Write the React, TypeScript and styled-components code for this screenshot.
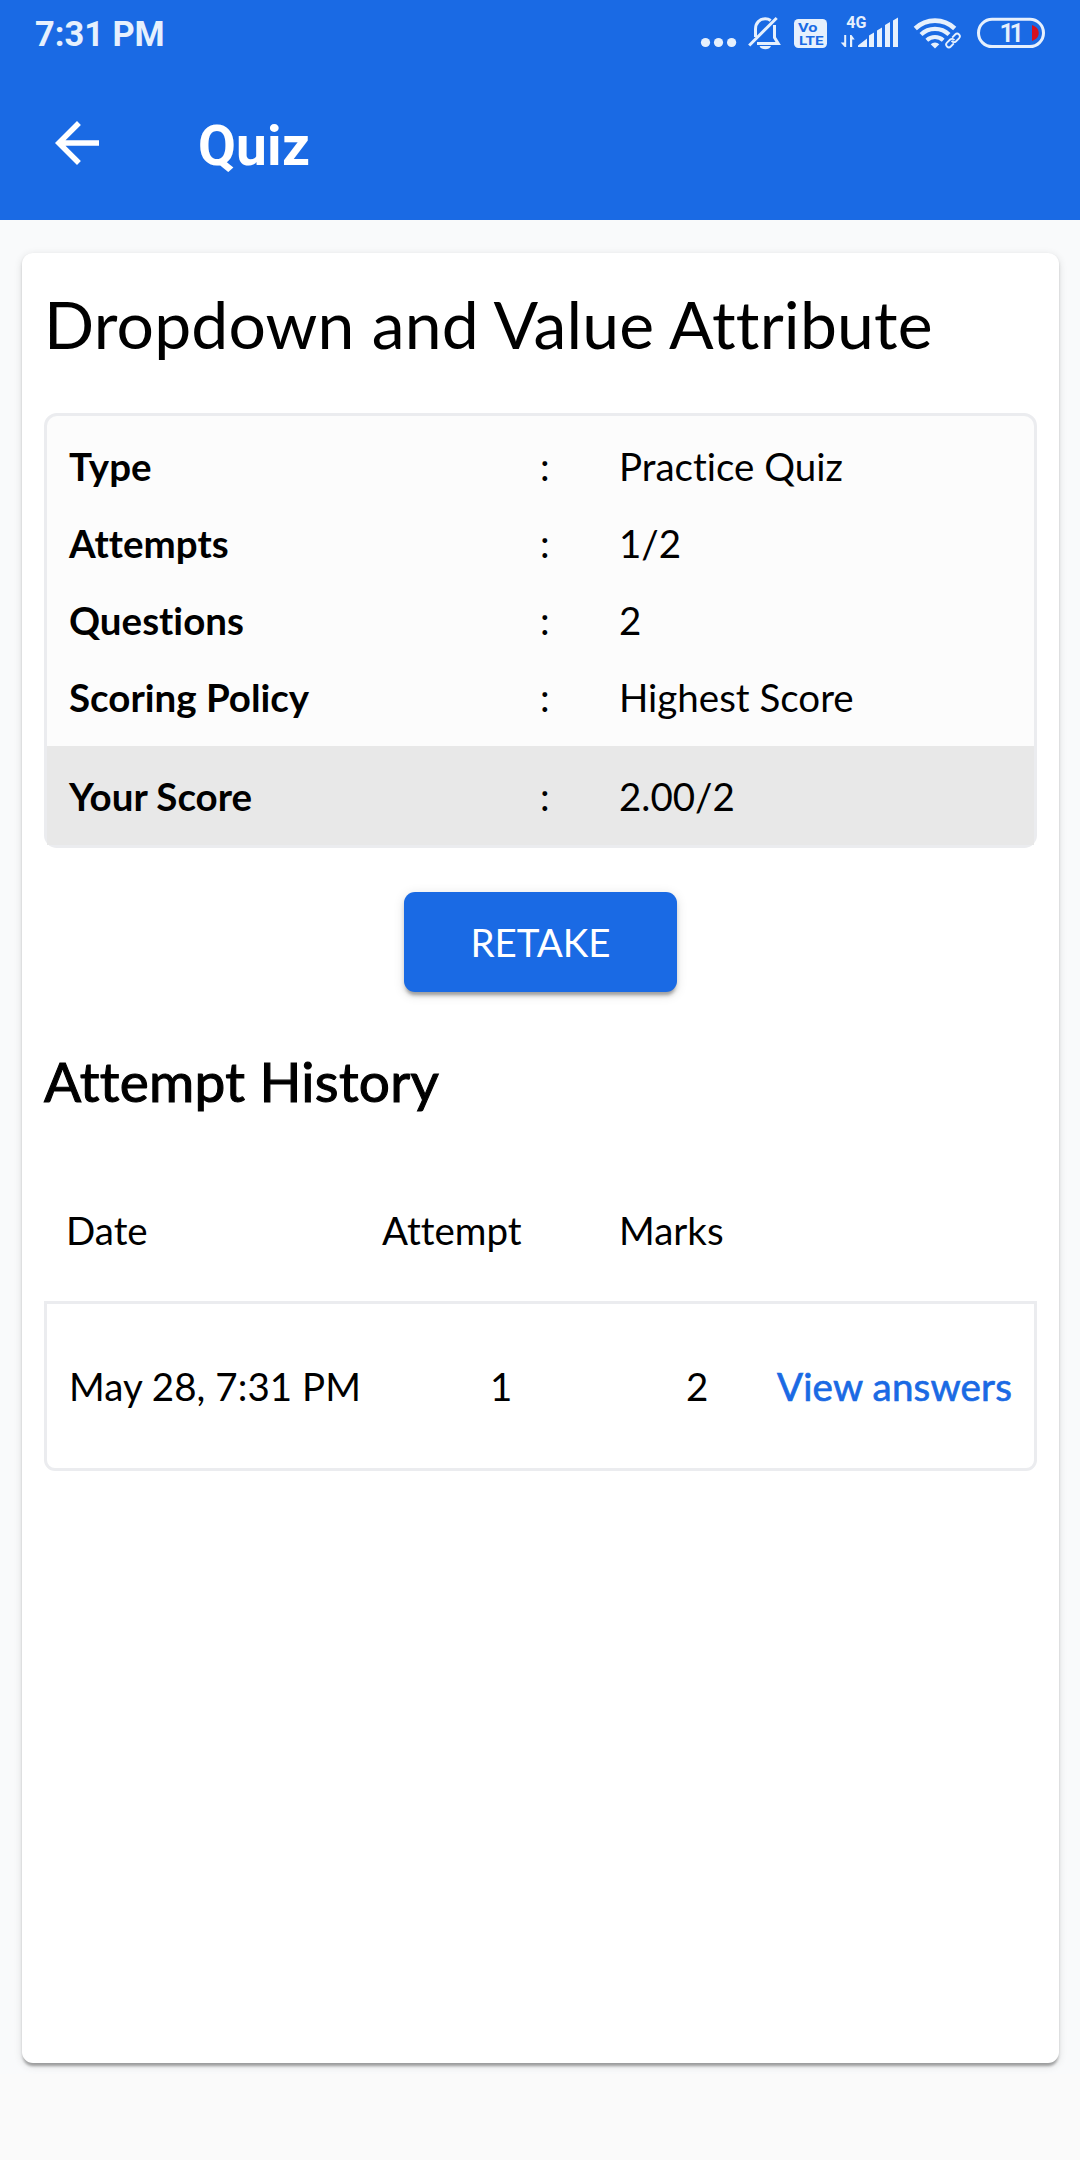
import React from "react";
import styled, { createGlobalStyle } from "styled-components";

const BLUE = "#1a6ae4";
const STATUS = "#e6f0fd";
const LINE = "#ebecef";

const GlobalStyle = createGlobalStyle`
  *, *::before, *::after { box-sizing: border-box; }
  body { margin: 0; background: #fafafa; }
`;

const Screen = styled.div`
  width: 1080px;
  height: 2160px;
  display: flex;
  flex-direction: column;
  overflow: hidden;
  background: #fafafa;
  color: #000;
  font-family: Lato, "Noto Sans", sans-serif;
  font-variant-ligatures: none;
`;

const TopArea = styled.header`
  height: 220px;
  flex: none;
  background: ${BLUE};
  font-family: Roboto, "Noto Sans", sans-serif;
`;

const StatusBar = styled.div`
  height: 66px;
  display: flex;
  justify-content: space-between;
  padding: 0 30px 0 35px;
  color: ${STATUS};
`;

const Clock = styled.span`
  font-size: 34.4px;
  font-weight: 700;
  line-height: 68px;
  white-space: nowrap;
`;

const StatusIcons = styled.div`
  display: flex;
`;

const Glyph = styled.svg`
  display: block;
  height: 66px;
  flex: none;
`;

const AppBar = styled.div`
  height: 154px;
  display: flex;
  align-items: center;
  padding-left: 44px;
`;

const BackButton = styled.button`
  width: 66px;
  height: 66px;
  padding: 0;
  border: 0;
  background: none;
  color: #fff;
`;

const AppTitle = styled.h1`
  margin: 6px 0 0 88px;
  color: #fff;
  font-size: 55px;
  font-weight: 700;
  line-height: 66px;
  letter-spacing: 0.2px;
`;

const Content = styled.main`
  height: 1854px;
  flex: none;
  display: flex;
  padding: 33px 21px 11px 22px;
  background: #f9fafb;
`;

const Card = styled.section`
  flex: 1;
  display: flex;
  flex-direction: column;
  padding: 31px 22px 0;
  border-radius: 11px;
  background: #fff;
  box-shadow: 0 5.5px 2.75px -2.75px rgba(0, 0, 0, 0.2),
    0 2.75px 2.75px rgba(0, 0, 0, 0.14), 0 2.75px 8.25px rgba(0, 0, 0, 0.12);
`;

const QuizTitle = styled.h2`
  margin: 0 0 49px;
  font-size: 66px;
  font-weight: 400;
  line-height: 80px;
  letter-spacing: 0.18px;
  white-space: nowrap;
`;

const Summary = styled.div`
  height: 435px;
  border: 3px solid ${LINE};
  border-radius: 13px;
  background: #fcfcfc;
`;

const SummaryGroup = styled.div<{ $score?: boolean }>`
  padding: 12px 22px 10px;
  background: ${(p) => (p.$score ? "#e8e8e8" : "transparent")};
`;

const SummaryRow = styled.div`
  display: grid;
  grid-template-columns: 471px 79px 1fr;
  font-size: 38.5px;
  line-height: 77px;
  white-space: nowrap;
`;

const Label = styled.span`
  font-weight: 700;
`;

const RetakeButton = styled.button`
  align-self: center;
  width: 273px;
  height: 100px;
  margin: 44px 0 56px;
  padding: 0;
  border: 0;
  border-radius: 11px;
  background: ${BLUE};
  color: #fff;
  font: 400 38.5px/100px Lato, "Noto Sans", sans-serif;
  box-shadow: 0 5.5px 2.75px -2.75px rgba(0, 0, 0, 0.2),
    0 4px 4px rgba(0, 0, 0, 0.14), 0 2.75px 12px rgba(0, 0, 0, 0.12);
`;

const HistoryTitle = styled.h3`
  margin: 0;
  font-size: 55px;
  font-weight: 400;
  line-height: 67px;
  letter-spacing: 0.26px;
  -webkit-text-stroke: 1.1px currentColor;
`;

const HistoryHead = styled.div`
  display: grid;
  grid-template-columns: 316px 237px 1fr;
  height: 143px;
  margin-top: 43px;
  padding: 1px 22px 0;
  font-size: 38.5px;
  line-height: 143px;
`;

const HistoryRow = styled.div`
  display: flex;
  align-items: center;
  height: 170px;
  padding: 0 22px;
  border: 3px solid ${LINE};
  border-radius: 0 0 11px 11px;
  font-size: 38.5px;
  line-height: 46px;
  white-space: nowrap;
`;

const DateCell = styled.span`
  width: 421px;
  letter-spacing: 0.06px;
`;

const AttemptCell = styled.span`
  width: 196px;
`;

const MarksCell = styled.span`
  flex: 1;
`;

const AnswersLink = styled.a`
  color: ${BLUE};
  letter-spacing: 0.18px;
  -webkit-text-stroke: 0.7px currentColor;
`;

type GlyphProps = { x: number; w: number; children: React.ReactNode };

/* Every status glyph spans the bar height; x and w are its horizontal slot. */
const StatusGlyph = ({ x, w, children }: GlyphProps) => (
  <Glyph width={w} height={66} viewBox={`${x} 0 ${w} 66`} fill={STATUS}>
    {children}
  </Glyph>
);

const Dots = () => (
  <StatusGlyph x={699} w={44}>
    <circle cx="705.5" cy="42.5" r="4.6" />
    <circle cx="718.5" cy="42.5" r="4.6" />
    <circle cx="731.6" cy="42.5" r="4.6" />
  </StatusGlyph>
);

const MutedBell = () => (
  <StatusGlyph x={743} w={45}>
    <g fill="none" stroke={STATUS} strokeWidth="3">
      <path d="M755.500 37V29c0-6 4.200-10.200 9.700-10.200 2 0 4 .6 5.500 1.700" />
      <path d="M774.500 25v12.500l3.700 6H757" />
      <path d="M749.2 45.5L776.7 18" />
    </g>
    <path d="M759.5 46h11.5c-1 2.200-3 3.200-5.700 3.200s-4.800-1-5.800-3.200z" />
  </StatusGlyph>
);

const VoLte = () => (
  <StatusGlyph x={788} w={46}>
    <rect x="794" y="19" width="33" height="29" rx="4.500" />
    <g fill={BLUE} fontFamily="Roboto, sans-serif" fontWeight="700" fontSize="12">
      <text x="798" y="31.500" textLength="19.500" lengthAdjust="spacingAndGlyphs">Vo</text>
      <text x="799" y="44.500" textLength="24.500" lengthAdjust="spacingAndGlyphs">LTE</text>
    </g>
  </StatusGlyph>
);

const Signal = () => (
  <StatusGlyph x={834} w={72}>
    <text x="846.200" y="28" fontSize="16.500" fontWeight="700" fontFamily="Roboto, sans-serif" textLength="20.200" lengthAdjust="spacingAndGlyphs">4G</text>
    <path d="M844.200 35h2v12h-1.500l-4-4.500h3.500zM850 47V35h1.500l3.200 4.500h-2.500V47z" />
    <path d="M858 47v-1.500l9-7V47zM869 47V35.500l5-3V47zM877 47V30.500l5-3V47zM885 47V25l5-3V47zM893 47V20.500l5-3V47z" />
  </StatusGlyph>
);

const Wifi = () => (
  <StatusGlyph x={906} w={62}>
    <g fill="none" stroke={STATUS}>
      <path d="M915.300 28.500a28.500 28.500 0 0 1 39.400 0" strokeWidth="4.600" />
      <path d="M921 34.500a20 20 0 0 1 28 0" strokeWidth="4.200" />
      <path d="M926.800 40.300a12 12 0 0 1 16.400 0" strokeWidth="4" />
    </g>
    <path d="M935 48.500l-4.300-4.300a6.200 6.200 0 0 1 8.600 0z" />
    <g transform="translate(953 40.500) rotate(-45)" fill="none">
      <g stroke={BLUE} strokeWidth="5">
        <rect x="-8.500" y="-2.700" width="9.500" height="5.400" rx="2.700" />
        <rect x="-1" y="-2.700" width="9.500" height="5.400" rx="2.700" />
      </g>
      <g stroke={STATUS} strokeWidth="1.800">
        <path d="M-1.500 2.700h-4.300a2.700 2.700 0 0 1 0-5.400h4.500a2.700 2.700 0 0 1 2.400 3.500" />
        <path d="M1.500-2.700h4.300a2.700 2.700 0 0 1 0 5.400H1.300a2.700 2.700 0 0 1-2.400-3.500" />
      </g>
    </g>
  </StatusGlyph>
);

const Battery = () => (
  <StatusGlyph x={968} w={82}>
    <rect x="978.500" y="19.300" width="65" height="27.300" rx="13.600" fill="none" stroke={STATUS} strokeWidth="3" />
    <path d="M1032 25c4.500 1.500 6.700 4.500 6.700 8s-2.200 6.500-6.700 8z" fill="#d80f1d" />
    <text x="999.600 1009.600" y="42" fontSize="25.500" fontWeight="600" fontFamily="Roboto, sans-serif">11</text>
  </StatusGlyph>
);

const quizFacts = [
  { label: "Type", value: "Practice Quiz" },
  { label: "Attempts", value: "1/2" },
  { label: "Questions", value: "2" },
  { label: "Scoring Policy", value: "Highest Score" },
];

const Fact = ({ label, value }: { label: string; value: string }) => (
  <SummaryRow>
    <Label>{label}</Label>
    <span>:</span>
    <span>{value}</span>
  </SummaryRow>
);

export default function App() {
  return (
    <Screen>
      <GlobalStyle />
      <TopArea>
        <StatusBar>
          <Clock>7:31 PM</Clock>
          <StatusIcons>
            <Dots />
            <MutedBell />
            <VoLte />
            <Signal />
            <Wifi />
            <Battery />
          </StatusIcons>
        </StatusBar>
        <AppBar>
          <BackButton aria-label="Back">
            <svg width="66" height="66" viewBox="0 0 24 24" fill="currentColor">
              <path d="M20 11H7.830l5.590-5.590L12 4l-8 8 8 8 1.410-1.410L7.830 13H20z" />
            </svg>
          </BackButton>
          <AppTitle>Quiz</AppTitle>
        </AppBar>
      </TopArea>
      <Content>
        <Card>
          <QuizTitle>Dropdown and Value Attribute</QuizTitle>
          <Summary>
            <SummaryGroup>
              {quizFacts.map((f) => (
                <Fact key={f.label} label={f.label} value={f.value} />
              ))}
            </SummaryGroup>
            <SummaryGroup $score>
              <Fact label="Your Score" value="2.00/2" />
            </SummaryGroup>
          </Summary>
          <RetakeButton>RETAKE</RetakeButton>
          <HistoryTitle>Attempt History</HistoryTitle>
          <HistoryHead>
            <span>Date</span>
            <span>Attempt</span>
            <span>Marks</span>
          </HistoryHead>
          <HistoryRow>
            <DateCell>May 28, 7:31 PM</DateCell>
            <AttemptCell>1</AttemptCell>
            <MarksCell>2</MarksCell>
            <AnswersLink>View answers</AnswersLink>
          </HistoryRow>
        </Card>
      </Content>
    </Screen>
  );
}
